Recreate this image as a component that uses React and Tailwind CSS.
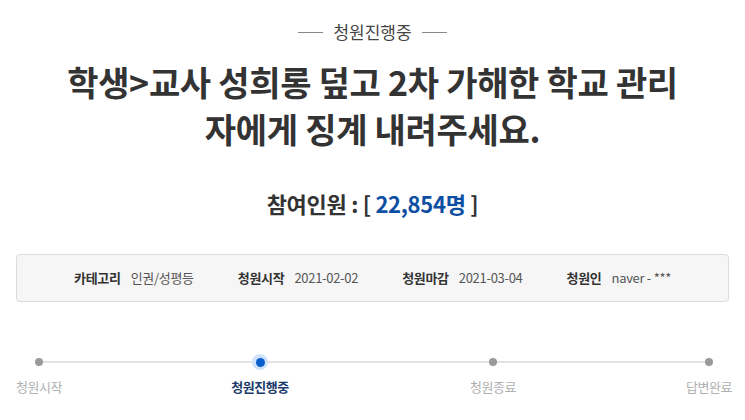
const font = { fontFamily: '"Noto Sans CJK KR", "Noto Sans", sans-serif' };

const info = [
	{ label: "카테고리", value: "인권/성평등" },
	{ label: "청원시작", value: "2021-02-02" },
	{ label: "청원마감", value: "2021-03-04" },
	{ label: "청원인", value: "naver - ***" },
];

const Step = ({ label, active, className }) => (
	<div className={"flex shrink-0 flex-col items-center " + className}>
		<div className="h-4 w-4 flex items-center justify-center">
			{active ? (
				<div className="h-4 w-4 rounded-full bg-[#cfe3fb] flex items-center justify-center">
					<div className="h-[9px] w-[9px] rounded-full bg-[#0a5fcc]" />
				</div>
			) : (
				<div className="h-2 w-2 rounded-full bg-[#9a9a9a]" />
			)}
		</div>
		<div
			className={
				"mt-[7px] whitespace-nowrap text-[13px] tracking-[-0.5px] " +
				(active ? "font-bold text-[#1b3a6b]" : "text-[#b0b0b0]")
			}
		>
			{label}
		</div>
	</div>
);

export default function App() {
	return (
		<div className="w-[745px] h-[420px] bg-white overflow-hidden" style={font}>
			<div className="flex items-center justify-center gap-[10px] pt-[19px]">
				<div className="h-px w-[25px] bg-[#888]" />
				<span className="text-[17px] leading-[26px] text-[#444]">청원진행중</span>
				<div className="h-px w-[25px] bg-[#888]" />
			</div>

			<h1 className="mt-[13px] text-center text-[34px] font-bold leading-[47px] tracking-[-0.3px] text-[#333]">
				학생&gt;교사 성희롱 덮고 2차 가해한 학교 관리
				<br />
				자에게 징계 내려주세요.
			</h1>

			<div className="mt-[36px] text-center text-[22px] font-bold leading-[30px] tracking-[-0.3px] text-[#333]">
				참여인원 : [ <span className="text-[#0b4ea2]">22,854명</span> ]
			</div>

			<div className="mx-[16px] mt-[36px] h-[48px] rounded-[4px] border border-[#dcdcdc] bg-[#f6f6f6] flex items-center justify-center gap-[44px] text-[13px] tracking-[-0.3px]">
				{info.map((i) => (
					<div key={i.label} className="flex items-center gap-[10px]">
						<span className="font-bold text-[#333]">{i.label}</span>
						<span className="text-[#555]">{i.value}</span>
					</div>
				))}
			</div>

			<div className="relative mx-[16px] mt-[52px]">
				<div className="absolute left-[23px] right-[23px] top-[7px] h-[2px] bg-[#e2e2e2]" />
				<div className="relative flex">
					<Step label="청원시작" className="w-[46px]" />
					<Step label="청원진행중" active className="w-[60px] ml-[168px]" />
					<Step label="청원종료" className="w-[46px] ml-[180px]" />
					<Step label="답변완료" className="w-[46px] ml-[170px]" />
				</div>
			</div>
		</div>
	);
}
